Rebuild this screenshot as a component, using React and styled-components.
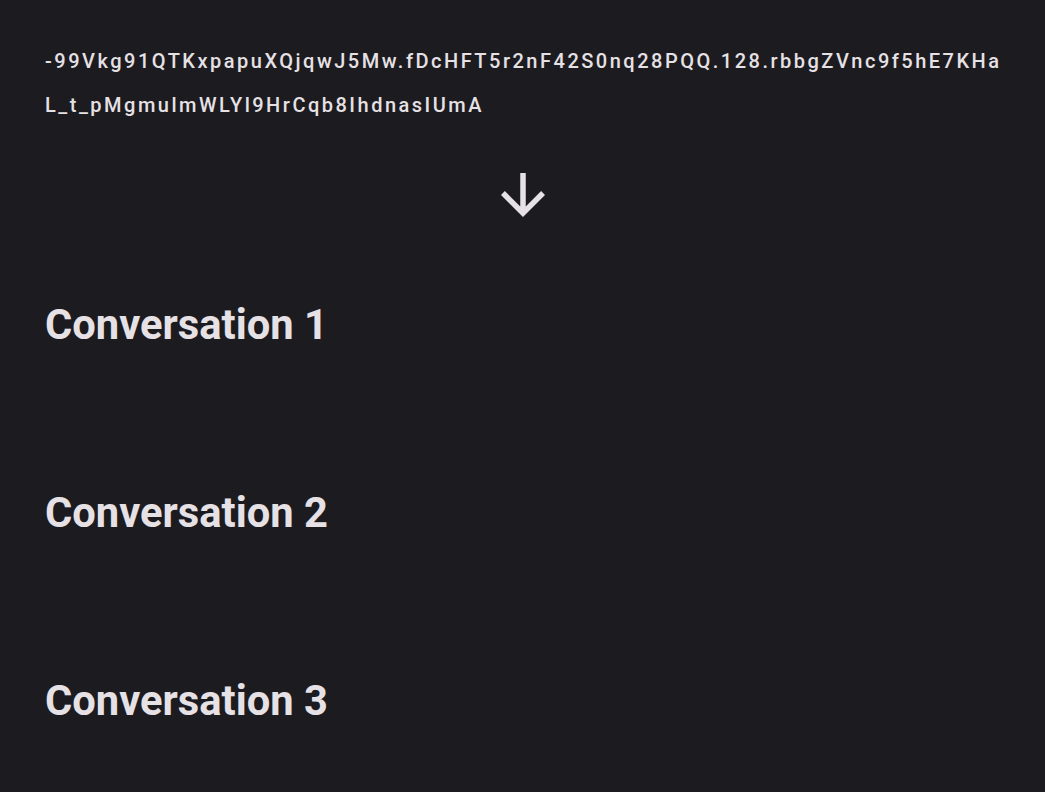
import React from 'react';
import styled, { createGlobalStyle } from 'styled-components';

const GlobalStyle = createGlobalStyle`
  body {
    margin: 0;
    background: #1c1b1f;
    color: #e6e1e5;
    font-family: Roboto, 'Noto Sans', sans-serif;
  }
`;

const Page = styled.div`
  display: flex;
  flex-direction: column;
  padding: 39px 40px 0 45px;
`;

const Token = styled.div`
  font-size: 20px;
  font-weight: 500;
  letter-spacing: 2.5px;
  line-height: 44px;
  word-break: break-all;
`;

const ArrowWrap = styled.div`
  display: flex;
  justify-content: center;
  margin-top: 35px;
  margin-bottom: 73px;
  padding-right: 5px;
  height: 66px;
`;

const List = styled.div`
  display: flex;
  flex-direction: column;
  gap: 140px;
`;

const Title = styled.h2`
  margin: 0;
  font-size: 41.7px;
  font-weight: 700;
  line-height: 48px;
`;

const conversations = ['Conversation 1', 'Conversation 2', 'Conversation 3'];

const App = () => {
  return (
    <Page>
      <GlobalStyle />
      <Token>
        -99Vkg91QTKxpapuXQjqwJ5Mw.fDcHFT5r2nF42S0nq28PQQ.128.rbbgZVnc9f5hE7KHaL_t_pMgmulmWLYl9HrCqb8IhdnasIUmA
      </Token>
      <ArrowWrap>
        <svg width="66" height="66" viewBox="0 0 24 24" fill="#e6e1e5">
          <path d="M20 12l-1.41-1.41L13 16.17V4h-2v12.17l-5.58-5.59L4 12l8 8 8-8z" />
        </svg>
      </ArrowWrap>
      <List>
        {conversations.map((c) => (
          <Title key={c}>{c}</Title>
        ))}
      </List>
    </Page>
  );
};

export default App;
